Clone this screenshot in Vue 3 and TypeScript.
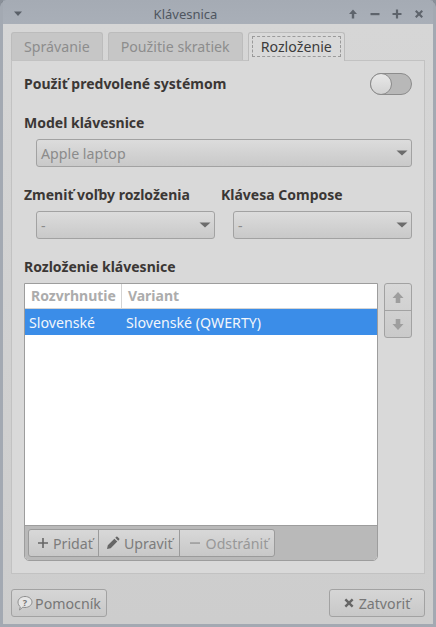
<script setup lang="ts">
const tabs = [
  { label: 'Správanie', active: false },
  { label: 'Použitie skratiek', active: false },
  { label: 'Rozloženie', active: true },
]
</script>

<template>
  <div class="window">
    <div class="titlebar">
      <svg class="menu-arrow" width="10" height="6" viewBox="0 0 10 6"><path d="M1 0.5h8L5 5z" fill="#5a6068" /></svg>
      <span class="title">Klávesnica</span>
      <div class="win-buttons">
        <svg width="12" height="12" viewBox="0 0 12 12"><path d="M6 1.500L10 6H7.200v4.500H4.800V6H2z" fill="#5e646c" /></svg>
        <svg width="12" height="12" viewBox="0 0 12 12"><rect x="1.500" y="5" width="9" height="2.200" fill="#5e646c" /></svg>
        <svg width="12" height="12" viewBox="0 0 12 12"><path d="M4.900 1.500h2.200v3.400h3.400v2.200H7.100v3.400H4.900V7.100H1.500V4.900h3.400z" fill="#5e646c" /></svg>
        <svg width="12" height="12" viewBox="0 0 12 12"><path d="M2 3.500L3.500 2 6 4.500 8.500 2 10 3.500 7.500 6 10 8.500 8.500 10 6 7.500 3.500 10 2 8.500 4.500 6z" fill="#5e646c" /></svg>
      </div>
    </div>

    <div class="content">
      <div class="tabs">
        <div v-for="tab in tabs" :key="tab.label" class="tab" :class="{ active: tab.active }">
          <span class="tab-label">{{ tab.label }}</span>
        </div>
      </div>

      <div class="page">
        <div class="default-row">
          <span class="heading">Použiť predvolené systémom</span>
          <div class="switch"><div class="knob"></div></div>
        </div>

        <div class="heading model-heading">Model klávesnice</div>
        <div class="combo model-combo">
          <span>Apple laptop</span>
          <svg width="12" height="6" viewBox="0 0 12 6"><path d="M0.500 0.500h11L6 5.500z" fill="#6c6c6c" /></svg>
        </div>

        <div class="two-cols">
          <div class="col">
            <div class="heading">Zmeniť voľby rozloženia</div>
            <div class="combo">
              <span>-</span>
              <svg width="12" height="6" viewBox="0 0 12 6"><path d="M0.500 0.500h11L6 5.500z" fill="#6c6c6c" /></svg>
            </div>
          </div>
          <div class="col">
            <div class="heading">Klávesa Compose</div>
            <div class="combo">
              <span>-</span>
              <svg width="12" height="6" viewBox="0 0 12 6"><path d="M0.500 0.500h11L6 5.500z" fill="#6c6c6c" /></svg>
            </div>
          </div>
        </div>

        <div class="heading layout-heading">Rozloženie klávesnice</div>
        <div class="layout-area">
          <div class="list-frame">
            <div class="list-head">
              <div class="head-cell first">Rozvrhnutie</div>
              <div class="head-cell">Variant</div>
            </div>
            <div class="list-row">
              <span class="cell-first">Slovenské</span>
              <span>Slovenské (QWERTY)</span>
            </div>
            <div class="list-empty"></div>
            <div class="toolbar">
              <div class="tool-group">
                <div class="tool add">
                  <svg width="12" height="12" viewBox="0 0 12 12"><path d="M5.200 1h1.600v4.200H11v1.600H6.800V11H5.200V6.800H1V5.200h4.200z" fill="#666" /></svg>
                  <span>Pridať</span>
                </div>
                <div class="tool edit">
                  <svg width="14" height="14" viewBox="0 0 14 14"><path d="M1 13l.8-3.700 6.600-6.600 2.900 2.900-6.600 6.600zM9.300 1.800l1-1a.8.8 0 0 1 1.100 0l1.800 1.800a.8.8 0 0 1 0 1.100l-1 1z" fill="#666" /></svg>
                  <span>Upraviť</span>
                </div>
                <div class="tool remove">
                  <svg width="12" height="12" viewBox="0 0 12 12"><rect x="1" y="5.300" width="10" height="1.500" fill="#9a9a9a" /></svg>
                  <span>Odstrániť</span>
                </div>
              </div>
            </div>
          </div>
          <div class="move-buttons">
            <div class="move">
              <svg width="12" height="13" viewBox="0 0 12 13"><path d="M6 1l5.500 6H8.300v5H3.700V7H.5z" fill="#9e9e9e" /></svg>
            </div>
            <div class="move">
              <svg width="12" height="13" viewBox="0 0 12 13"><path d="M6 12L.5 6h3.200V1h4.600v5h3.200z" fill="#9e9e9e" /></svg>
            </div>
          </div>
        </div>
      </div>

      <div class="footer">
        <div class="btn help">
          <svg width="16" height="16" viewBox="0 0 16 16">
            <path d="M8 1.500c3.800 0 7 2.400 7 5.500s-3.200 5.500-7 5.500c-.8 0-1.500-.1-2.200-.3L2.500 15l.8-3.200C1.900 10.800 1 9 1 7c0-3.100 3.200-5.500 7-5.500z" fill="#e6e6e6" stroke="#8e8e8e" />
            <text x="8" y="11" text-anchor="middle" class="help-mark">?</text>
          </svg>
          <span>Pomocník</span>
        </div>
        <div class="btn close">
          <svg width="10" height="10" viewBox="0 0 10 10"><path d="M.5 2.200L2.200.5 5 3.300 7.800.5l1.700 1.700L6.700 5l2.800 2.800-1.700 1.700L5 6.700 2.200 9.500.5 7.800 3.300 5z" fill="#666" /></svg>
          <span>Zatvoriť</span>
        </div>
      </div>
    </div>
  </div>
</template>

<style>
html,
body {
  margin: 0;
  background: #8a9099;
}
</style>

<style scoped>
.window {
  width: 436px;
  height: 627px;
  box-sizing: border-box;
  display: flex;
  flex-direction: column;
  font-family: "Noto Sans", "Open Sans", sans-serif;
  font-size: 14.2px;
  color: #3c3c3c;
  background: #a3a9b2;
  border-radius: 6px 6px 0 0;
  overflow: hidden;
  padding: 0 3px 3px;
  box-shadow: inset 0 1px 0 #7d838c;
}

.titlebar {
  height: 24px;
  flex: none;
  box-sizing: border-box;
  padding-top: 3px;
  display: flex;
  align-items: center;
  position: relative;
  background: linear-gradient(#a5abb4, #a9afb8);
}

.menu-arrow {
  margin-left: 10px;
}

.title {
  position: absolute;
  left: 0;
  right: 65px;
  text-align: center;
  font-size: 13px;
  color: #4f5660;
}

.win-buttons {
  margin-left: auto;
  margin-right: 8px;
  display: flex;
  gap: 10px;
}

.content {
  flex: 1;
  display: flex;
  flex-direction: column;
  background: linear-gradient(#d6d6d6, #cdcdcd);
  padding: 8px 8px 8px;
  min-height: 0;
}

.tabs {
  display: flex;
  gap: 5px;
  height: 28px;
  flex: none;
  position: relative;
  z-index: 1;
}

.tab {
  box-sizing: border-box;
  height: 28px;
  padding: 0 12px;
  display: flex;
  align-items: center;
  background: #c6c6c6;
  border: 1px solid #bcbcbc;
  border-bottom: 0;
  border-radius: 3px 3px 0 0;
  color: #8d8d8d;
}

.tab.active {
  height: 29px;
  padding: 0 3px;
  background: #d9d9d9;
  color: #3c3c3c;
}

.tab.active .tab-label {
  border: 1px dashed #9a9a9a;
  padding: 0 8px;
  line-height: 19px;
  height: 19px;
  margin-top: -1px;
}

.page {
  box-sizing: border-box;
  flex: none;
  height: 514px;
  background: #d9d9d9;
  border: 1px solid #c2c2c2;
  padding: 12px 12px 11px;
}

.heading {
  font-size: 14px;
  font-weight: 700;
  line-height: 20px;
  color: #3b3735;
}

.default-row {
  height: 22px;
  display: flex;
  align-items: center;
  justify-content: space-between;
}

.switch {
  box-sizing: border-box;
  width: 42px;
  height: 22px;
  border: 1px solid #8c8c8c;
  border-radius: 11px;
  background: #b8b8b8;
  position: relative;
}

.knob {
  position: absolute;
  left: -1px;
  top: -1px;
  box-sizing: border-box;
  width: 22px;
  height: 22px;
  border: 1px solid #8c8c8c;
  border-radius: 50%;
  background: linear-gradient(#e8e8e8, #d2d2d2);
}

.model-heading {
  margin-top: 18px;
}

.combo {
  box-sizing: border-box;
  height: 28px;
  display: flex;
  align-items: center;
  justify-content: space-between;
  border: 1px solid #a2a2a2;
  border-radius: 3px;
  background: linear-gradient(#dcdcdc, #c9c9c9);
  padding: 0 3px 0 4px;
  color: #8b8b8b;
  margin-left: 12px;
}

.model-combo {
  margin-top: 6px;
}

.two-cols {
  margin-top: 18px;
  display: grid;
  grid-template-columns: 191px 191px;
  column-gap: 6px;
}

.col .combo {
  margin-top: 6px;
}

.layout-heading {
  margin-top: 18px;
}

.layout-area {
  margin-top: 6px;
  display: flex;
  gap: 6px;
  align-items: flex-start;
}

.list-frame {
  box-sizing: border-box;
  width: 354px;
  height: 278px;
  border: 1px solid #9d9d9d;
  border-radius: 0 0 5px 5px;
  display: flex;
  flex-direction: column;
  background: #fff;
  overflow: hidden;
}

.list-head {
  display: flex;
  height: 25px;
  flex: none;
  border-bottom: 1px solid #d4d4d4;
  box-sizing: border-box;
  font-size: 14px;
  font-weight: 700;
  color: #acacac;
  align-items: center;
}

.head-cell {
  padding: 0 6px;
  line-height: 24px;
}

.head-cell.first {
  padding-right: 5px;
  border-right: 1px solid #d4d4d4;
}

.list-row {
  height: 26px;
  flex: none;
  background: #3b8de8;
  color: #f2f6fb;
  display: flex;
  align-items: center;
  padding-left: 4px;
}

.cell-first {
  width: 97px;
}

.list-empty {
  flex: 1;
}

.toolbar {
  height: 35px;
  flex: none;
  box-sizing: border-box;
  background: #b9b9b9;
  border-top: 1px solid #9d9d9d;
  padding: 3px;
}

.tool-group {
  display: inline-flex;
  height: 28px;
  box-sizing: border-box;
  border: 1px solid #9b9b9b;
  border-radius: 3px;
  background: linear-gradient(#d8d8d8, #c8c8c8);
  overflow: hidden;
}

.tool {
  display: flex;
  align-items: center;
  gap: 4px;
  color: #7c7c7c;
  padding: 0 6px 0 7px;
  border-left: 1px solid #9b9b9b;
}

.tool:first-child {
  border-left: 0;
  padding: 0 5px 0 8px;
  gap: 4px;
}

.tool.remove {
  color: #989898;
  padding: 0 6px 0 9px;
  gap: 5px;
}

.move-buttons {
  box-sizing: border-box;
  width: 28px;
  height: 55px;
  border: 1px solid #a2a2a2;
  border-radius: 3px;
  display: flex;
  flex-direction: column;
  background: linear-gradient(#d8d8d8, #cacaca);
}

.move {
  flex: 1;
  display: flex;
  align-items: center;
  justify-content: center;
}

.move + .move {
  border-top: 1px solid #a2a2a2;
}

.footer {
  margin-top: 15px;
  display: flex;
  justify-content: space-between;
}

.btn {
  box-sizing: border-box;
  width: 96px;
  height: 28px;
  border: 1px solid #a2a2a2;
  border-radius: 3px;
  background: linear-gradient(#d6d6d6, #c8c8c8);
  display: flex;
  align-items: center;
  justify-content: center;
  gap: 2px;
  color: #777;
}

.close {
  gap: 5px;
}

.help-mark {
  font-family: "Noto Sans", sans-serif;
  font-size: 9px;
  font-weight: 700;
  fill: #777;
}
</style>
